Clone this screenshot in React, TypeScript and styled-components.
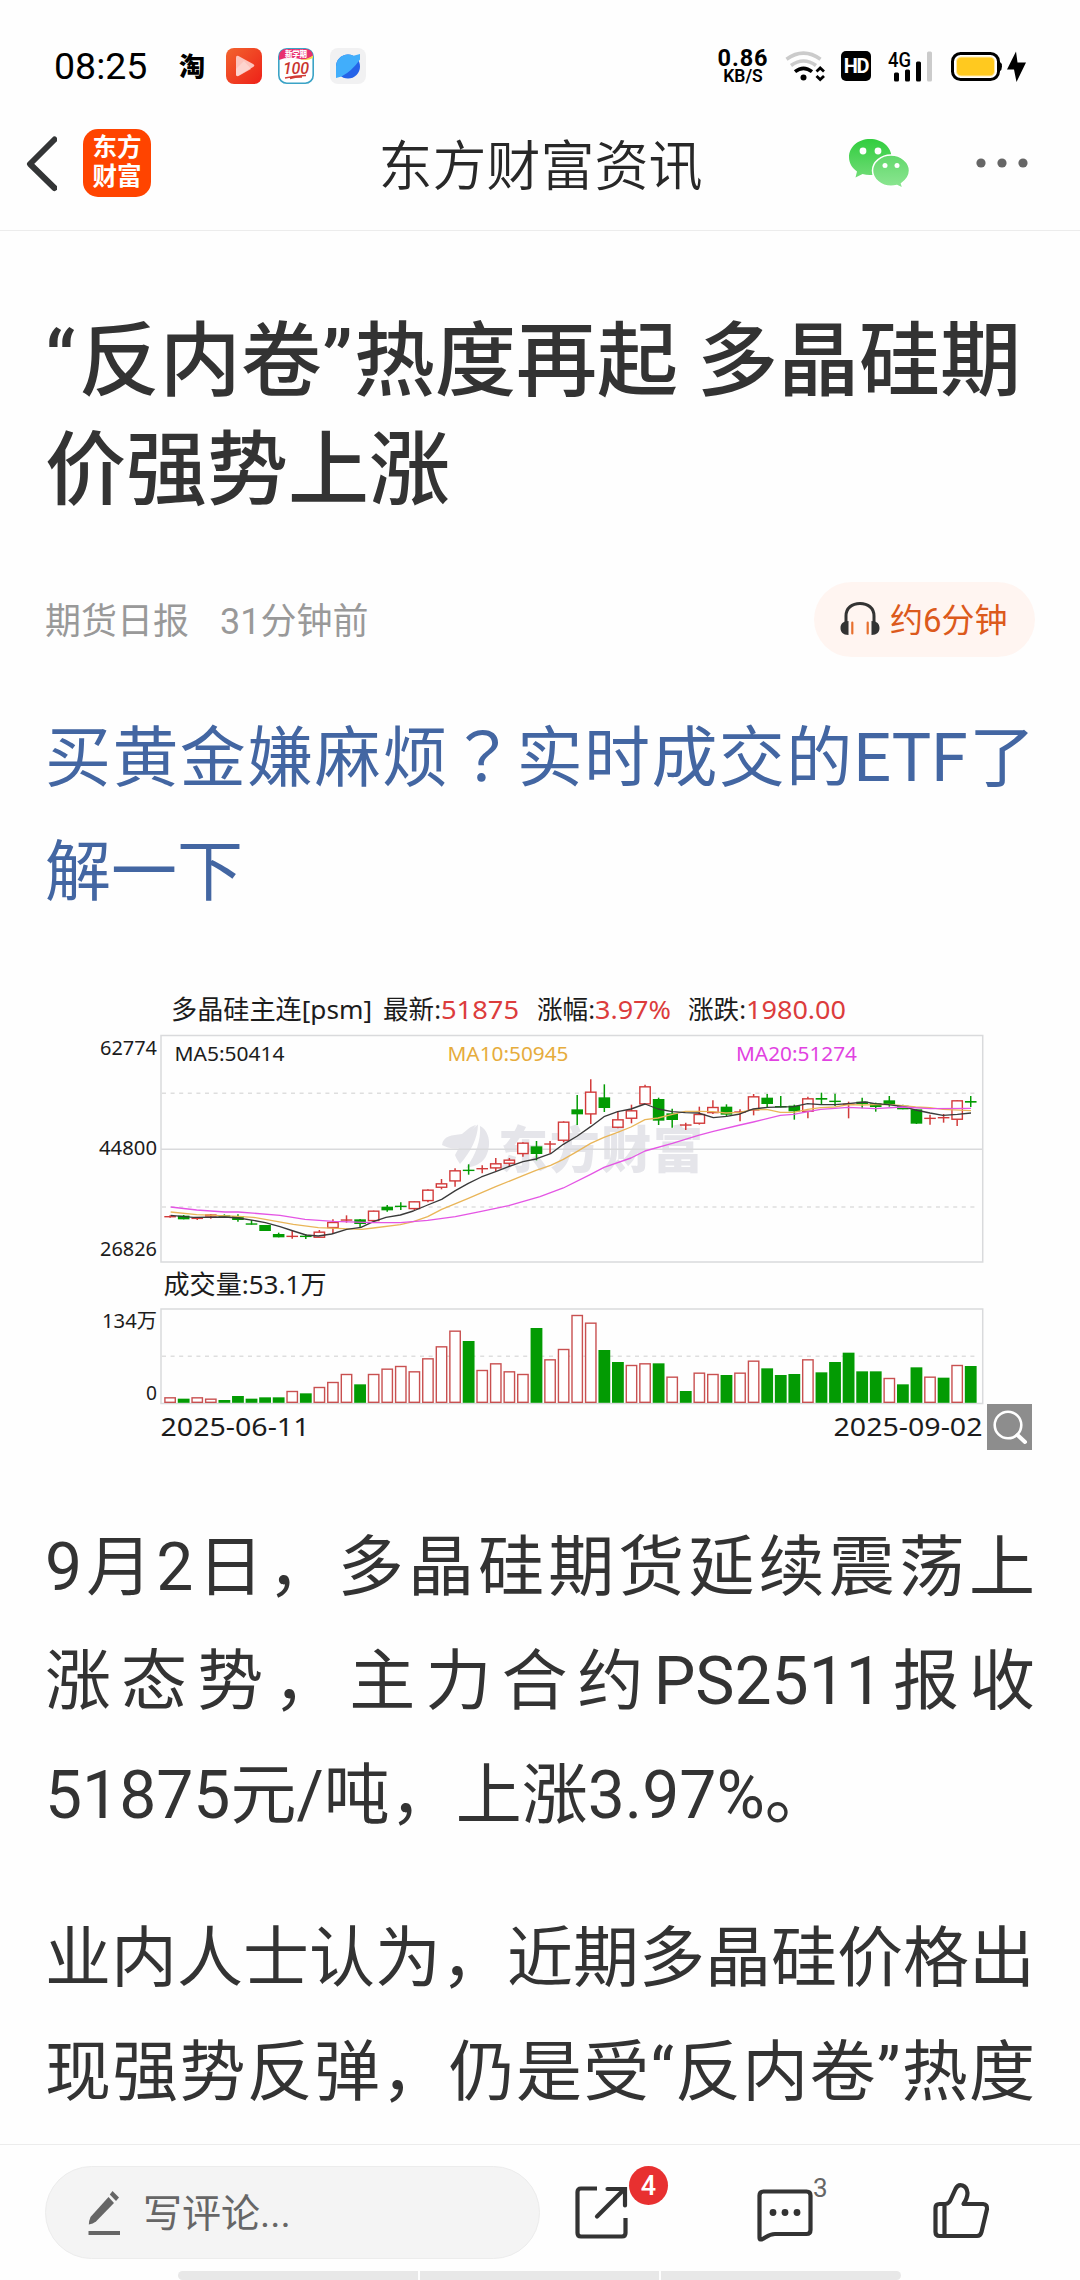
import React from 'react';
import styled, { createGlobalStyle } from 'styled-components';

const ui = `Roboto, "Noto Sans CJK SC", sans-serif`;
const chartFont = `"Noto Sans", "Noto Sans CJK SC", sans-serif`;

const Global = createGlobalStyle`
  html, body { margin: 0; padding: 0; background: #fefefe; }
  * { box-sizing: border-box; }
`;

const Page = styled.div`
  width: 1080px;
  height: 2280px;
  overflow: hidden;
  display: flex;
  flex-direction: column;
  background: #fefefe;
  color: #333;
  font-family: ${ui};
`;

/* ---------- status bar ---------- */
const StatusBar = styled.div`
  height: 100px;
  flex: none;
  display: flex;
  align-items: center;
  justify-content: space-between;
  padding: 32px 54px 0 54px;
  color: #000;
`;
const StatusGroup = styled.div<{ $gap: number }>`
  display: flex;
  align-items: center;
  gap: ${p => p.$gap}px;
  height: 68px;
`;
const Clock = styled.span`
  font-size: 37.5px;
  line-height: 68px;
  width: 109px;
`;
const Tao = styled.span`
  font-family: "Noto Sans CJK SC", sans-serif;
  font-weight: 900;
  font-size: 26px;
  line-height: 36px;
  width: 27px;
  margin: 0 4px 3px 0;
`;
const Speed = styled.div`
  display: flex;
  flex-direction: column;
  align-items: center;
  font-weight: 700;
  width: 50px;
`;
const SpeedValue = styled.span`
  font-size: 23.5px;
  line-height: 20px;
  letter-spacing: 0.9px;
`;
const SpeedUnit = styled.span`
  font-size: 17.5px;
  font-weight: 600;
  line-height: 17px;
`;
const Hd = styled.span`
  width: 30px;
  height: 30px;
  margin: 0 1px 0 -2px;
  border-radius: 5px;
  background: #000;
  color: #fff;
  font-size: 20px;
  font-weight: 700;
  line-height: 31px;
  text-align: center;
  letter-spacing: -1.2px;
`;

/* ---------- header ---------- */
const Header = styled.header`
  height: 131px;
  flex: none;
  display: grid;
  grid-template-columns: 1fr 324px 1fr;
  align-items: center;
  border-bottom: 1px solid #ececec;
  padding: 0 52px 4px 25px;
`;
const HeaderSide = styled.div<{ $end?: boolean }>`
  display: flex;
  align-items: center;
  justify-content: ${p => (p.$end ? 'flex-end' : 'flex-start')};
  gap: ${p => (p.$end ? 66 : 26)}px;
`;
const HeaderTitle = styled.h1`
  margin: 0 -14px 0 14px;
  font-size: 54px;
  font-weight: 350;
  line-height: 64px;
  white-space: nowrap;
  color: #282828;
  padding-top: 10px;
`;
const AppLogo = styled.div`
  width: 68px;
  height: 68px;
  border-radius: 15px;
  background: #ff4400;
  color: #fff;
  font-family: "Noto Sans CJK SC", sans-serif;
  font-size: 24.5px;
  font-weight: 700;
  line-height: 29px;
  text-align: center;
  padding-top: 2px;
`;

/* ---------- article ---------- */
const Article = styled.main`
  flex: 1;
  min-height: 0;
  overflow: hidden;
  padding: 76px 45px 0;
`;
const Headline = styled.h2`
  margin: 0;
  font-size: 81px;
  font-weight: 500;
  line-height: 109px;
  white-space: nowrap;
  word-spacing: -1px;
  color: #333;
`;
const Quote = styled.span<{ $after: number }>`
  margin-right: ${p => p.$after}px;
`;
const Line = styled.span<{ $fill?: boolean }>`
  display: block;
  white-space: nowrap;
  text-align: left;
  text-align-last: ${p => (p.$fill ? 'justify' : 'left')};
`;
const CenteredMark = styled.span`
  font-family: "Noto Sans CJK TC", sans-serif;
  line-height: 0;
`;
const Meta = styled.div`
  display: flex;
  align-items: center;
  height: 76px;
  margin-top: 56px;
  font-size: 36px;
  color: #999;
`;
const MetaText = styled.span<{ $left?: number }>`
  margin-left: ${p => p.$left || 0}px;
  padding-bottom: 3px;
`;
const Listen = styled.div`
  display: flex;
  align-items: center;
  width: 221px;
  height: 75px;
  margin-left: auto;
  padding-left: 26px;
  gap: 10px;
  border-radius: 38px;
  background: #fff5f1;
  color: #dc5a1c;
  font-size: 33px;
`;
const Promo = styled.p`
  margin: 45px 0 0;
  font-size: 66px;
  line-height: 114px;
  color: #4366a2;
`;
const Paragraph = styled.p<{ $top: number }>`
  margin: ${p => p.$top}px 0 0;
  font-size: 66px;
  line-height: 114px;
`;
const Figure = styled.figure`
  position: relative;
  width: 990px;
  height: 480px;
  margin: 50px 0 0;
`;
const Magnify = styled.div`
  position: absolute;
  left: 942px;
  top: 424px;
  width: 45px;
  height: 46px;
  background: #8d8d8d;
`;

/* ---------- bottom bar ---------- */
const Bottom = styled.footer`
  height: 136px;
  flex: none;
  border-top: 1px solid #ececec;
  padding: 21px 0 0 45px;
  display: flex;
  flex-direction: column;
  gap: 12px;
`;
const Actions = styled.div`
  display: flex;
  align-items: flex-start;
`;
const CommentBox = styled.div`
  width: 495px;
  height: 93px;
  border-radius: 47px;
  border: 1px solid #ececec;
  background: #f4f4f4;
  color: #666;
  font-size: 39px;
  display: flex;
  align-items: center;
  gap: 22px;
  padding-left: 42px;
`;
const Placeholder = styled.span`
  padding-bottom: 5px;
`;
const Action = styled.div<{ $left: number }>`
  position: relative;
  height: 93px;
  margin-left: ${p => p.$left}px;
  padding-top: 15px;
`;
const Badge = styled.span`
  position: absolute;
  left: 54px;
  top: 0;
  width: 39px;
  height: 39px;
  border-radius: 50%;
  background: #e83030;
  color: #fff;
  font-size: 27px;
  font-weight: 500;
  line-height: 40px;
  text-align: center;
`;
const Count = styled.span`
  position: absolute;
  left: 56px;
  top: 7px;
  font-size: 26px;
  line-height: 30px;
  color: #666;
`;
const NavHandle = styled.div`
  display: flex;
  gap: 2px;
  width: 723px;
  height: 9px;
  flex: none;
  margin-left: 133px;
  border-radius: 5px;
  overflow: hidden;
`;
const NavPart = styled.div`
  flex: 1;
  background: #e8e8e8;
`;

/* ---------- chart data ---------- */
const X0 = 170.1;
const STEP = 13.57;
const RED = '#d23a3a';
const GREEN = '#039b03';

// kind, high, body top, body bottom, low
type Candle = [string, number, number, number, number];
const candles: Candle[] = [
  ['r', 706, 708, 711, 713], ['g', 705, 707, 718, 718], ['r', 711, 713, 717, 720], ['r', 702, 703, 710, 716],
  ['g', 703, 706, 709, 710], ['g', 703, 708, 720, 725], ['g', 720, 730, 733, 734], ['g', 735, 735, 753, 753],
  ['g', 758, 762, 772, 772], ['r', 752, 767, 771, 776], ['g', 762, 767, 771, 777], ['r', 750, 755, 772, 772],
  ['r', 718, 726, 743, 760], ['r', 706, 718, 722, 728], ['g', 717, 718, 732, 742], ['r', 692, 692, 722, 724],
  ['g', 675, 680, 691, 695], ['g', 667, 677, 680, 690], ['r', 664, 664, 686, 692], ['r', 628, 629, 662, 667],
  ['r', 597, 610, 622, 628], ['r', 565, 571, 603, 620], ['g', 553, 569, 572, 584], ['r', 556, 564, 568, 580],
  ['r', 534, 550, 564, 574], ['r', 534, 539, 550, 558], ['r', 487, 488, 521, 530], ['g', 483, 499, 522, 541],
  ['r', 483, 490, 493, 520], ['r', 424, 425, 481, 487], ['g', 345, 388, 403, 435], ['r', 298, 335, 402, 432],
  ['g', 313, 352, 384, 396], ['r', 394, 418, 442, 445], ['r', 374, 391, 415, 430], ['r', 314, 319, 372, 374],
  ['g', 353, 357, 422, 435], ['g', 386, 400, 420, 443], ['r', 428, 433, 436, 450], ['r', 380, 402, 430, 434],
  ['r', 361, 381, 398, 402], ['g', 373, 380, 404, 410], ['r', 388, 394, 397, 424], ['r', 342, 349, 390, 406],
  ['g', 342, 353, 372, 382], ['g', 348, 378, 381, 382], ['g', 374, 377, 394, 419], ['r', 350, 355, 394, 415],
  ['g', 338, 354, 359, 375], ['g', 341, 362, 365, 378], ['r', 365, 371, 374, 415], ['g', 353, 365, 372, 385],
  ['g', 368, 370, 381, 395], ['g', 348, 361, 374, 380], ['g', 374, 377, 388, 388], ['g', 388, 388, 431, 432],
  ['r', 404, 413, 416, 434], ['r', 402, 411, 414, 428], ['r', 361, 361, 418, 438], ['g', 348, 363, 368, 381],
];

const volumes: number[] = [
  412, 416, 412, 416, 420, 408, 416, 412, 412, 393, 400, 381, 366, 342, 373, 342, 326, 318, 334, 295,
  259, 212, 243, 330, 310, 334, 342, 204, 298, 267, 165, 188, 270, 306, 315, 310, 310, 350, 393, 338,
  342, 345, 338, 302, 325, 345, 342, 298, 337, 306, 278, 334, 334, 354, 373, 322, 350, 353, 315, 318,
];
const volumeKinds = 'rgrrgggggrgrrrgrrrrrrrgrrrrgrrrrggrrgrgrrgrrgggrgggggrggrgrg'.split('');

const ma5 = '272,706 340,712 435,711 475,714 520,721 556,728 600,740 640,753 678,765 715,768 755,762 800,748 843,742 880,725 918,712 961,705 1000,693 1043,675 1085,658 1126,632 1165,610 1204,591 1247,575 1286,560 1329,545 1368,537 1412,521 1450,493 1492,468 1532,440 1572,410 1613,395 1653,387 1695,372 1734,387 1777,395 1816,398 1855,399 1900,413 1940,409 1980,402 2020,387 2063,382 2140,380 2183,371 2222,374 2265,374 2304,371 2355,366 2385,371 2425,374 2470,380 2507,390 2550,399 2589,406 2632,403 2673,399';
const ma10 = '272,696 350,704 475,709 520,712 560,719 640,733 715,743 845,748 880,744 961,734 1000,725 1043,710 1085,688 1165,655 1247,620 1329,587 1368,571 1412,556 1450,538 1492,514 1532,490 1572,472 1613,457 1653,441 1695,419 1734,414 1777,403 1816,394 1855,394 1898,395 1937,399 1980,397 2020,388 2063,389 2101,397 2140,397 2183,388 2222,383 2265,381 2304,374 2347,375 2386,374 2425,373 2468,377 2507,381 2550,383 2589,388 2673,392';
const ma20 = '272,681 350,690 435,696 475,696 600,706 675,718 760,724 880,728 961,728 1043,721 1126,710 1204,694 1286,677 1380,650 1450,624 1532,583 1572,562 1653,534 1695,513 1777,490 1855,466 1900,454 1980,435 2020,426 2101,406 2140,403 2222,388 2265,385 2304,382 2386,386 2468,381 2550,386 2673,385';

const py = (v: number) => 980 + v / 3;

const CandleMark = ({ c, i }: { c: Candle; i: number }) => {
  const x = X0 + i * STEP;
  const color = c[0] === 'r' ? RED : GREEN;
  const h = (c[3] - c[2]) / 3;
  const hollow = c[0] === 'r' && h > 2.5;
  return (
    <g stroke={color} strokeWidth={1.4} fill={hollow ? '#fff' : color}>
      <line x1={x} x2={x} y1={py(c[1])} y2={py(c[4])} strokeWidth={1.5} />
      {hollow ? (
        <rect x={x - 5.2} width={10.4} y={py(c[2]) + 0.5} height={h - 0.6} />
      ) : (
        <rect x={x - 5.8} width={11.6} y={py(c[2])} height={Math.max(h, 1.4)} stroke="none" />
      )}
    </g>
  );
};

const Ma = ({ points, color }: { points: string; color: string }) => (
  <polyline points={points} transform="translate(80 980) scale(0.33333)" fill="none" stroke={color} strokeWidth={4} strokeLinejoin="round" />
);

const Label = (p: { x: number; y: number; w: number; s?: number; c?: string; children: string }) => (
  <text x={p.x} y={p.y} textLength={p.w} lengthAdjust="spacingAndGlyphs" fontSize={p.s || 20} fill={p.c || '#1c1c1c'}>
    {p.children}
  </text>
);

const Chart = () => (
  <svg width="990" height="480" viewBox="45 980 990 480" fontFamily={chartFont}>
    <Label x={171} y={1018.5} w={201} s={26}>多晶硅主连[psm]</Label>
    <Label x={383} y={1018.5} w={58} s={26}>最新:</Label>
    <Label x={441} y={1018.5} w={78} s={26} c="#dc3c3c">51875</Label>
    <Label x={537} y={1018.5} w={58} s={26}>涨幅:</Label>
    <Label x={595} y={1018.5} w={76} s={26} c="#dc3c3c">3.97%</Label>
    <Label x={688} y={1018.5} w={58} s={26}>涨跌:</Label>
    <Label x={746} y={1018.5} w={100} s={26} c="#dc3c3c">1980.00</Label>

    <g fill="#e5e5ea">
      <path d="M442 1145 C443 1136 452 1135 462 1134 C468 1129 471 1126 476 1125 C468 1135 464 1141 462 1147 C456 1150 447 1148 442 1145Z" />
      <path d="M455 1155 C462 1142 467 1132 478 1124.500 C478 1138 470 1153 460 1164 C458 1161 456 1158 455 1155Z" />
      <path d="M466 1168 C476 1155 481 1140 480 1126 C490 1131 492 1147 485 1158 C481 1164 473 1167 466 1168Z" />
    </g>
    <text x="498" y="1168" fontSize="50" fontWeight="900" fill="#e5e5ea" textLength="205">东方财富</text>

    <g fill="none" stroke="#d9dadc" strokeWidth="1.500">
      <rect x="161" y="1035.500" width="821.700" height="226.500" />
      <rect x="161" y="1309" width="821.700" height="94.500" />
      <line x1="161" x2="982" y1="1149.300" y2="1149.300" />
      <g strokeDasharray="4 4.600" stroke="#dedede">
        <line x1="162" x2="979" y1="1093.300" y2="1093.300" />
        <line x1="162" x2="979" y1="1207" y2="1207" />
        <line x1="162" x2="979" y1="1356.300" y2="1356.300" />
      </g>
    </g>

    <Label x={100} y={1054.5} w={57} s={20.5}>62774</Label>
    <Label x={99} y={1155} w={58} s={20.5}>44800</Label>
    <Label x={100} y={1256} w={57} s={20.5}>26826</Label>
    <Label x={174.5} y={1061} w={110} s={20.5}>MA5:50414</Label>
    <Label x={447.5} y={1061} w={121} s={20.5} c="#e6ac3c">MA10:50945</Label>
    <Label x={736} y={1061} w={121} s={20.5} c="#e142e1">MA20:51274</Label>

    {candles.map((c, i) => <CandleMark key={i} c={c} i={i} />)}
    <Ma points={ma10} color="#e9b558" />
    <Ma points={ma5} color="#3a3a3a" />
    <Ma points={ma20} color="#e455e4" />

    <Label x={163.5} y={1294} w={163} s={26}>成交量:53.1万</Label>
    <Label x={102} y={1328} w={55} s={20.5}>134万</Label>
    <Label x={146} y={1400} w={11} s={20.5}>0</Label>
    {volumes.map((v, i) => {
      const x = X0 + i * STEP;
      const y = 1260 + v / 3;
      const h = 1402.8 - y;
      return volumeKinds[i] === 'r' ? (
        <rect key={i} x={x - 5.2} y={y + 0.5} width={10.4} height={h - 1} fill="#fff" stroke="#c85050" strokeWidth={1.4} />
      ) : (
        <rect key={i} x={x - 5.9} y={y} width={11.8} height={h} fill={GREEN} />
      );
    })}
    <Label x={160.5} y={1435.5} w={149} s={26}>2025-06-11</Label>
    <Label x={833.5} y={1435.5} w={149} s={26}>2025-09-02</Label>
  </svg>
);

/* ---------- icons ---------- */
const VideoIcon = () => (
  <svg width="36" height="36" viewBox="0 0 36 36">
    <defs>
      <linearGradient id="vid" x1="0" y1="0" x2="1" y2="1">
        <stop offset="0" stopColor="#f2642e" /><stop offset="1" stopColor="#ee2018" />
      </linearGradient>
    </defs>
    <rect width="36" height="36" rx="8" fill="url(#vid)" />
    <path d="M10 9.500q0-2.500 2.500-1.500l15 8.200q1.800 1.300 0 2.600l-15 9q-2.500 1-2.500-1.500Z" fill="#fcc4bd" />
    <path d="M10 21l8-8 7 8-12.500 7q-2.500 1-2.500-1.500Z" fill="#fddad5" opacity=".7" />
  </svg>
);
const ScoreIcon = () => (
  <svg width="36" height="36" viewBox="0 0 36 36" fontFamily={ui}>
    <defs><clipPath id="sc"><rect x="1" y="1" width="34" height="34" rx="7" /></clipPath></defs>
    <rect x=".8" y=".8" width="34.400" height="34.400" rx="8" fill="#fff" stroke="#3ba3c6" strokeWidth="1.600" />
    <g clipPath="url(#sc)">
      <path d="M1 1H35V8Q27 13 22 11Q10 8 1 12Z" fill="#e8316f" />
      <path d="M22 11.500Q29 12 35 7.500V10Q30 13 22 11.500Z" fill="#f5d94c" />
    </g>
    <text x="7" y="9" fontSize="7.500" fontWeight="900" fill="#fff" textLength="22">新学期</text>
    <text x="5" y="26" fontSize="16" fontWeight="500" fontStyle="italic" fill="#c9352f" textLength="26">100</text>
    <path d="M7 30Q17 27.500 28 27.500M12 30.500Q18 29 24 29.200" stroke="#d33c36" strokeWidth="1.300" fill="none" />
  </svg>
);
const PlanetIcon = () => (
  <svg width="36" height="36" viewBox="0 0 36 36">
    <rect width="36" height="36" rx="8" fill="#f1f1f2" />
    <circle cx="18" cy="18.500" r="12" fill="#2563e8" />
    <path d="M6 30V18.500A12 12 0 0 1 23.500 7.800L30 6V11.500Q22 23 11.500 28.500Z" fill="#41aefb" />
  </svg>
);
const WifiIcon = () => (
  <svg width="41" height="31" viewBox="0 0 41 31" fill="none" strokeWidth="3.600">
    <path d="M1.500 8.200Q18.500-4 35.500 8.200" stroke="#cbcbcb" />
    <path d="M6 14.500Q18.500 5.500 31 14.500" stroke="#cbcbcb" />
    <path d="M10 20.700Q18.500 14 27 20.700" stroke="#000" />
    <circle cx="18.500" cy="26.500" r="3" fill="#000" />
    <path d="M31.500 20.500L35.200 17L39 20.500M31.500 25L35.200 28.500L39 25" stroke="#000" strokeWidth="2.800" />
  </svg>
);
const SignalIcon = () => (
  <svg width="45" height="31" viewBox="0 0 45 31" fontFamily={ui} overflow="visible">
    <text x="-1" y="15.500" fontSize="20" fontWeight="500" textLength="23" lengthAdjust="spacingAndGlyphs">4G</text>
    <rect x="5" y="21.500" width="5" height="9" rx="1.500" />
    <rect x="16" y="18.500" width="5" height="12" rx="1.500" />
    <rect x="27" y="10.500" width="5" height="20" rx="1.500" />
    <rect x="38" y=".5" width="5" height="30" rx="1.500" fill="#cbcbcb" />
  </svg>
);
const BatteryIcon = () => (
  <svg width="75" height="31" viewBox="0 0 75 31">
    <rect x="1.500" y="2.500" width="46" height="26" rx="8" fill="#fff" stroke="#000" strokeWidth="3" />
    <path d="M48.500 10.500Q51 12 51 15.500T48.500 20.500Z" />
    <rect x="5.500" y="6" width="38" height="19" rx="4.500" fill="#ffc91f" stroke="#ffe9a6" strokeWidth="1" />
    <path d="M65 .5L56 18.500H63L65.500 31L75 11.500H66.500Z" />
  </svg>
);
const BackIcon = () => (
  <svg width="32" height="58" viewBox="0 0 32 58">
    <path d="M29.500 5.500L5 30L29.500 54" fill="none" stroke="#333536" strokeWidth="6" strokeLinecap="round" strokeLinejoin="round" />
  </svg>
);
const WeChatIcon = () => (
  <svg width="62" height="50" viewBox="0 0 62 50" overflow="visible">
    <defs>
      <linearGradient id="wa" x1="0" y1="0" x2="0" y2="1"><stop offset="0" stopColor="#31cd3e" /><stop offset="1" stopColor="#6fdc76" /></linearGradient>
      <linearGradient id="wb" x1="0" y1="0" x2="0" y2="1"><stop offset="0" stopColor="#62d86b" /><stop offset="1" stopColor="#8de693" /></linearGradient>
    </defs>
    <path d="M22 1C10 1 1 9 1 19C1 25 4 30 9 33.500L7.500 39.500L14.500 36Q18 37 22 37C34 37 43.500 29 43.500 19S34 1 22 1Z" fill="url(#wa)" />
    <path d="M43 17C33 17 24.500 24 24.500 32.500S33 48.300 43 48.300Q46 48.300 49 47.500L55 50.500L53.500 45.500C58 42.500 61.500 38 61.500 32.500C61.500 24 53 17 43 17Z" fill="url(#wb)" stroke="#fff" strokeWidth="1.500" />
    <circle cx="15" cy="13" r="3.400" fill="#fff" /><circle cx="30" cy="13" r="3.400" fill="#fff" />
    <circle cx="37" cy="27.500" r="2.500" fill="#fff" /><circle cx="49" cy="27.500" r="2.500" fill="#fff" />
  </svg>
);
const MoreIcon = () => (
  <svg width="52" height="10" viewBox="0 0 52 10" fill="#666">
    <circle cx="5" cy="5" r="4.600" /><circle cx="26" cy="5" r="4.600" /><circle cx="47" cy="5" r="4.600" />
  </svg>
);
const HeadphoneIcon = () => (
  <svg width="40" height="36" viewBox="0 0 40 36">
    <path d="M6 24V15C6 7 12 2.500 20 2.500S34 7 34 15V24" fill="none" stroke="#333" strokeWidth="3" />
    <path d="M8.500 20V34C3 34 .5 31 .5 27S3 20 8.500 20ZM31.500 20V34C37 34 39.500 31 39.500 27S37 20 31.500 20Z" fill="#333" />
    <path d="M12.300 21.500V32.500M27.700 21.500V32.500" stroke="#e8702e" strokeWidth="2.200" strokeLinecap="round" />
  </svg>
);
const SearchIcon = () => (
  <svg width="45" height="46" viewBox="0 0 45 46" fill="none" stroke="#fff">
    <circle cx="21" cy="21" r="13.300" strokeWidth="2.600" />
    <path d="M30.500 31L38 38" strokeWidth="4" strokeLinecap="round" />
  </svg>
);
const PencilIcon = () => (
  <svg width="33" height="45" viewBox="0 0 33 45" fill="#666">
    <path d="M20.500 7L26 13L8 31.500Q5 33.800.8 34.500Q1 30.500 2.500 27Z" />
    <path d="M24.500 1L31 7.500L28 11L21.800 4.500Z" />
    <rect x=".5" y="41" width="31.500" height="4" />
  </svg>
);
const ShareIcon = () => (
  <svg width="54" height="62" viewBox="0 0 54 62" fill="none" stroke="#333" strokeWidth="4.200">
    <path d="M22 7.500H6Q2.500 7.500 2.500 11V52Q2.500 55.500 6 55.500H47Q50.500 55.500 50.500 52V37" />
    <path d="M32.500 8H50V24.500" strokeLinecap="round" />
    <path d="M22 35.500L48.500 9" strokeLinecap="round" />
  </svg>
);
const CommentIcon = () => (
  <svg width="57" height="62" viewBox="0 0 57 62" fill="none" stroke="#333" strokeWidth="4.200">
    <path d="M6.500 10.500H49.500Q53.500 10.500 53.500 14.500V49Q53.500 53 49.500 53H18C10 53 8 58.500 3.500 58.500Q2.500 58.500 2.500 56V14.500Q2.500 10.500 6.500 10.500Z" />
    <g fill="#333" stroke="none"><circle cx="16" cy="31.500" r="3.400" /><circle cx="28" cy="31.500" r="3.400" /><circle cx="40" cy="31.500" r="3.400" /></g>
  </svg>
);
const LikeIcon = () => (
  <svg width="57" height="62" viewBox="0 0 57 62" fill="none" stroke="#333" strokeWidth="4.200" strokeLinejoin="round">
    <path d="M6.500 23H12.500Q16 22.500 17.500 19L22.500 8Q25 3 29.500 4.500Q34 6 34.500 12Q34.500 17 30.500 23H50Q54.500 23.500 54 28L48.500 51Q47.500 55 44 55H6.500Q2.500 55 2.500 51V27Q2.500 23 6.500 23ZM11.500 23V55" />
  </svg>
);

export default function App() {
  return (
    <Page>
      <Global />
      <StatusBar>
        <StatusGroup $gap={16}>
          <Clock>08:25</Clock>
          <Tao>淘</Tao>
          <VideoIcon />
          <ScoreIcon />
          <PlanetIcon />
        </StatusGroup>
        <StatusGroup $gap={17}>
          <Speed>
            <SpeedValue>0.86</SpeedValue>
            <SpeedUnit>KB/S</SpeedUnit>
          </Speed>
          <WifiIcon />
          <Hd>HD</Hd>
          <SignalIcon />
          <BatteryIcon />
        </StatusGroup>
      </StatusBar>

      <Header>
        <HeaderSide>
          <BackIcon />
          <AppLogo>东方<br />财富</AppLogo>
        </HeaderSide>
        <HeaderTitle>东方财富资讯</HeaderTitle>
        <HeaderSide $end>
          <WeChatIcon />
          <MoreIcon />
        </HeaderSide>
      </Header>

      <Article>
        <Headline>
          <Line><Quote $after={3}>“</Quote>反内卷<Quote $after={1}>”</Quote>热度再起 多晶硅期</Line>
          <Line>价强势上涨</Line>
        </Headline>
        <Meta>
          <MetaText>期货日报</MetaText>
          <MetaText $left={31}>31分钟前</MetaText>
          <Listen>
            <HeadphoneIcon />
            <MetaText>约6分钟</MetaText>
          </Listen>
        </Meta>
        <Promo>
          <Line $fill>买黄金嫌麻烦<CenteredMark lang="zh-TW">？</CenteredMark>实时成交的ETF了</Line>
          <Line>解一下</Line>
        </Promo>
        <Figure>
          <Chart />
          <Magnify><SearchIcon /></Magnify>
        </Figure>
        <Paragraph $top={51}>
          <Line $fill>9月2日，多晶硅期货延续震荡上</Line>
          <Line $fill>涨态势，主力合约PS2511报收</Line>
          <Line>51875元/吨，上涨3.97%。</Line>
        </Paragraph>
        <Paragraph $top={49}>
          <Line $fill>业内人士认为，近期多晶硅价格出</Line>
          <Line $fill>现强势反弹，仍是受“反内卷”热度</Line>
        </Paragraph>
      </Article>

      <Bottom>
        <Actions>
          <CommentBox>
            <PencilIcon />
            <Placeholder>写评论...</Placeholder>
          </CommentBox>
          <Action $left={35}><ShareIcon /><Badge>4</Badge></Action>
          <Action $left={128}><CommentIcon /><Count>3</Count></Action>
          <Action $left={119}><LikeIcon /></Action>
        </Actions>
        <NavHandle><NavPart /><NavPart /><NavPart /></NavHandle>
      </Bottom>
    </Page>
  );
}
